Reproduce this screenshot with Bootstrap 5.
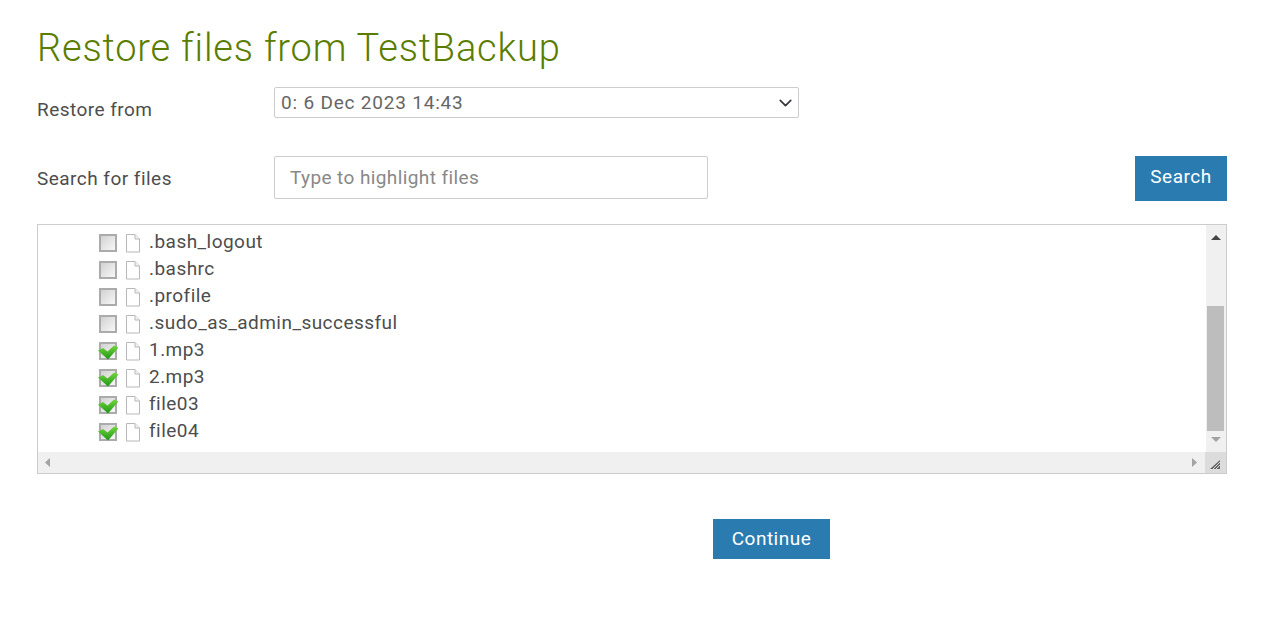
<!DOCTYPE html>
<html lang="en">
<head>
<meta charset="utf-8">
<title>Restore files</title>
<link href="https://cdn.jsdelivr.net/npm/bootstrap@5.3.0/dist/css/bootstrap.min.css" rel="stylesheet">
<style>
body{font-family:Roboto,"Liberation Sans",sans-serif;color:#4d4d4d;background:#fff;overflow:hidden}
.page-wrap{padding:25px 58px 0 37px}
.page-title{font-family:Roboto,"Liberation Sans",sans-serif;font-size:38px;line-height:46px;font-weight:300;color:#5a7d00;letter-spacing:.82px;margin:0 0 16px}
.field-label{width:237px;flex:none;font-size:19px;color:#4d4d4d;letter-spacing:.47px}
.from-row{height:69px}
.from-row .field-label{padding-top:11px;line-height:24px}
.from-select{width:525px;height:31px;padding:0 30px 0 6px;font-size:19px;line-height:28px;letter-spacing:.8px;color:#666;border-color:#ccc;border-radius:2px;background-position:right 4px center;background-size:17px 14px}
.search-row{height:68px}
.search-row .field-label{padding-top:10px;line-height:26px}
.search-input{width:434px;height:43px;padding:0 15px;font-size:19px;letter-spacing:.4px;color:#555;border-color:#ccc;border-radius:2px}
.search-input::placeholder{color:#888;opacity:1}
.act-btn{background:#2a7cb0;color:#fff;border:0;border-radius:0;font-size:19px;letter-spacing:.5px;padding:0}
.act-btn:hover{background:#2a7cb0;color:#fff}
.search-btn{width:92px;height:45px;padding-bottom:2px}
.tree-box{height:250px;border:1px solid #ccc;background:#fff}
.tree-list{padding:3px 0 0 61px;height:227px}
.tree-item{height:27px;font-size:19px;line-height:27px;letter-spacing:.46px;color:#4d4d4d;white-space:nowrap}
.tree-check{width:20px;height:20px;margin-top:5px;flex:none;margin-left:-1px}
.tree-doc{width:16px;height:20px;margin:5px 0 0 7px;flex:none}
.tree-name{margin-left:8px}
.vbar{width:20px;flex:none;background:#f0f0f0}
.vbar-space{height:61px}
.vbar-thumb{height:125px;margin:0 2px 0 1px;width:17px;background:#bdbdbd}
.hbar{height:21px;background:#f0f0f0}
.bar-end{width:21px;background:#dcdcdc}
.continue-row{padding:45px 0 0 676px}
.continue-btn{width:117px;height:40px}
</style>
</head>
<body>
<svg width="0" height="0" class="position-absolute">
  <defs>
    <linearGradient id="boxfill" x1="0" y1="0" x2="1" y2="1"><stop offset="0" stop-color="#cfcfcf"/><stop offset="1" stop-color="#fafafa"/></linearGradient>
    <linearGradient id="tickfill" x1="0" y1="0" x2="0" y2="1"><stop offset="0" stop-color="#74d63c"/><stop offset="1" stop-color="#1c9616"/></linearGradient>
    <symbol id="ic-box" viewBox="0 0 20 20"><rect x="2" y="2" width="16" height="16" fill="url(#boxfill)" stroke="#ababab" stroke-width="2"/></symbol>
    <symbol id="ic-tick" viewBox="0 0 20 20"><rect x="2" y="2" width="16" height="16" fill="url(#boxfill)" stroke="#ababab" stroke-width="2"/><path d="M0 9.500 5 7 9.500 10.500 16 4.500 20.500 6.500 10 18.500Z" fill="url(#tickfill)"/></symbol>
    <symbol id="ic-doc" viewBox="0 0 16 20"><path d="M1.500 1.500H10L14.500 6V19H1.500Z" fill="#fff" stroke="#b8b8b8"/><path d="M10 1.500V6H14.500" fill="#f2f2f2" stroke="#b8b8b8"/></symbol>
  </defs>
</svg>
<main class="page-wrap">
  <h1 class="page-title">Restore files from TestBackup</h1>
  <div class="d-flex from-row">
    <label class="field-label" for="from">Restore from</label>
    <div><select id="from" class="form-select from-select"><option>0: 6 Dec 2023 14:43</option></select></div>
  </div>
  <div class="d-flex search-row">
    <label class="field-label" for="q">Search for files</label>
    <div><input id="q" class="form-control search-input" placeholder="Type to highlight files"></div>
    <div class="ms-auto"><button class="btn act-btn search-btn">Search</button></div>
  </div>
  <div class="tree-box d-flex flex-column">
    <div class="d-flex flex-grow-1 overflow-hidden">
      <div class="tree-list flex-grow-1">
        <div class="tree-item d-flex"><svg class="tree-check"><use href="#ic-box"/></svg><svg class="tree-doc"><use href="#ic-doc"/></svg><span class="tree-name">.bash_logout</span></div>
        <div class="tree-item d-flex"><svg class="tree-check"><use href="#ic-box"/></svg><svg class="tree-doc"><use href="#ic-doc"/></svg><span class="tree-name">.bashrc</span></div>
        <div class="tree-item d-flex"><svg class="tree-check"><use href="#ic-box"/></svg><svg class="tree-doc"><use href="#ic-doc"/></svg><span class="tree-name">.profile</span></div>
        <div class="tree-item d-flex"><svg class="tree-check"><use href="#ic-box"/></svg><svg class="tree-doc"><use href="#ic-doc"/></svg><span class="tree-name">.sudo_as_admin_successful</span></div>
        <div class="tree-item d-flex"><svg class="tree-check"><use href="#ic-tick"/></svg><svg class="tree-doc"><use href="#ic-doc"/></svg><span class="tree-name">1.mp3</span></div>
        <div class="tree-item d-flex"><svg class="tree-check"><use href="#ic-tick"/></svg><svg class="tree-doc"><use href="#ic-doc"/></svg><span class="tree-name">2.mp3</span></div>
        <div class="tree-item d-flex"><svg class="tree-check"><use href="#ic-tick"/></svg><svg class="tree-doc"><use href="#ic-doc"/></svg><span class="tree-name">file03</span></div>
        <div class="tree-item d-flex"><svg class="tree-check"><use href="#ic-tick"/></svg><svg class="tree-doc"><use href="#ic-doc"/></svg><span class="tree-name">file04</span></div>
      </div>
      <div class="vbar d-flex flex-column">
        <svg width="20" height="20"><path d="M5 15h10l-5-5z" fill="#444"/></svg>
        <div class="vbar-space"></div>
        <div class="vbar-thumb"></div>
        <svg width="20" height="20"><path d="M5 6h10l-5 5z" fill="#a3a3a3"/></svg>
      </div>
    </div>
    <div class="hbar d-flex justify-content-between">
      <svg width="20" height="21"><path d="M12 6v9l-5-4.500z" fill="#a3a3a3"/></svg>
      <div class="d-flex">
        <svg width="20" height="21"><path d="M7 6v9l5-4.500z" fill="#a3a3a3"/></svg>
        <svg class="bar-end" width="21" height="21"><path d="M5 17 15 8v9z" fill="#666"/><path d="M8 17 15 10M11 17 15 13" stroke="#dcdcdc"/></svg>
      </div>
    </div>
  </div>
  <div class="continue-row"><button class="btn act-btn continue-btn">Continue</button></div>
</main>
</body>
</html>
